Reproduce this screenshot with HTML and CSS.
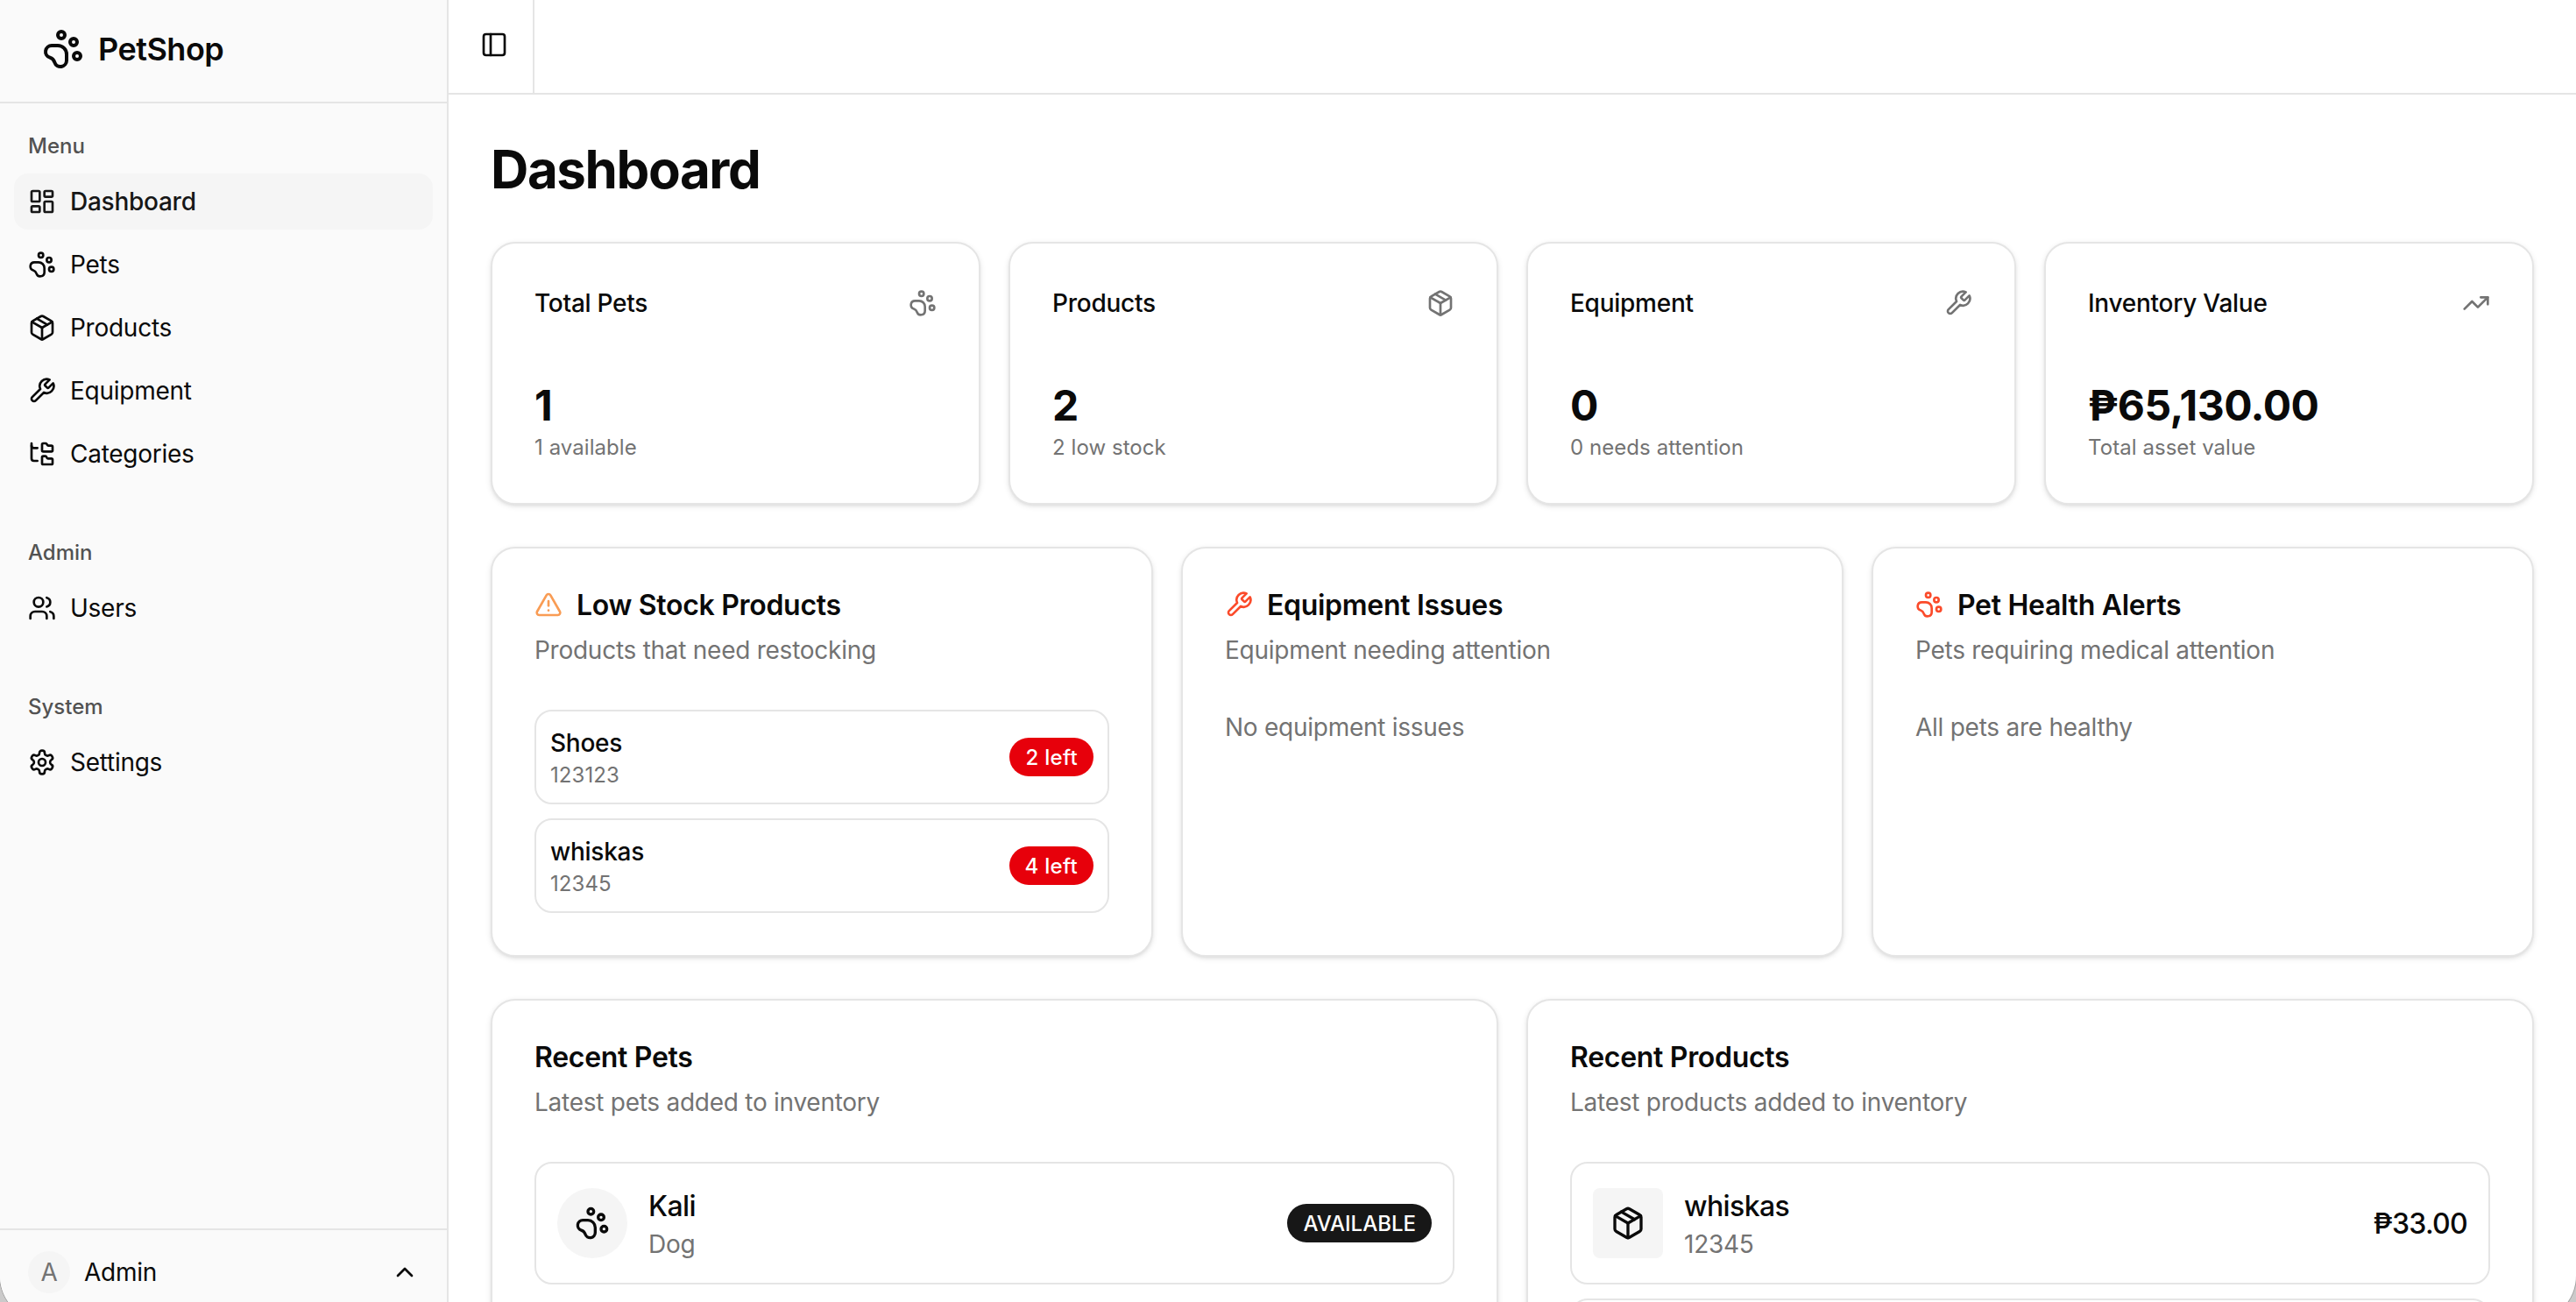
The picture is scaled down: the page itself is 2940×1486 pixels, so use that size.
FILE: index.html
```html
<!DOCTYPE html>
<html lang="en">
<head>
    <meta charset="UTF-8">
    <meta name="viewport" content="width=device-width, initial-scale=1.0">
    <title>Dashboard - PetShop</title>
    <link rel="stylesheet" href="styles.css">
</head>
<body>
    <!-- Icon set -->
    <svg class="icon-defs" xmlns="http://www.w3.org/2000/svg">
        <symbol id="paw" viewBox="0 0 24 24">
            <circle cx="11" cy="4" r="2"/>
            <circle cx="18" cy="8" r="2"/>
            <circle cx="20" cy="16" r="2"/>
            <path d="M9 10a5 5 0 0 1 5 5v3.5a3.5 3.5 0 0 1-6.84 1.045Q6.52 17.48 4.46 16.84A3.5 3.5 0 0 1 5.5 10Z"/>
        </symbol>
        <symbol id="dashboard" viewBox="0 0 24 24">
            <rect width="7" height="9" x="3" y="3" rx="1"/>
            <rect width="7" height="5" x="14" y="3" rx="1"/>
            <rect width="7" height="9" x="14" y="12" rx="1"/>
            <rect width="7" height="5" x="3" y="16" rx="1"/>
        </symbol>
        <symbol id="package" viewBox="0 0 24 24">
            <path d="M11 21.73a2 2 0 0 0 2 0l7-4A2 2 0 0 0 21 16V8a2 2 0 0 0-1-1.73l-7-4a2 2 0 0 0-2 0l-7 4A2 2 0 0 0 3 8v8a2 2 0 0 0 1 1.73z"/>
            <path d="M12 22V12"/>
            <path d="M3.29 7 12 12l8.71-5"/>
            <path d="m7.5 4.27 9 5.15"/>
        </symbol>
        <symbol id="wrench" viewBox="0 0 24 24">
            <path d="M14.7 6.3a1 1 0 0 0 0 1.4l1.6 1.6a1 1 0 0 0 1.4 0l3.77-3.77a6 6 0 0 1-7.94 7.94l-6.91 6.91a2.12 2.12 0 0 1-3-3l6.91-6.91a6 6 0 0 1 7.94-7.94l-3.76 3.76z"/>
        </symbol>
        <symbol id="folder-tree" viewBox="0 0 24 24">
            <path d="M20 10a1 1 0 0 0 1-1V6a1 1 0 0 0-1-1h-2.5a1 1 0 0 1-.8-.4l-.9-1.2A1 1 0 0 0 15 3h-2a1 1 0 0 0-1 1v5a1 1 0 0 0 1 1Z"/>
            <path d="M20 21a1 1 0 0 0 1-1v-3a1 1 0 0 0-1-1h-2.9a1 1 0 0 1-.88-.55l-.42-.85a1 1 0 0 0-.92-.6H13a1 1 0 0 0-1 1v5a1 1 0 0 0 1 1Z"/>
            <path d="M3 5a2 2 0 0 0 2 2h3"/>
            <path d="M3 3v13a2 2 0 0 0 2 2h3"/>
        </symbol>
        <symbol id="users" viewBox="0 0 24 24">
            <path d="M16 21v-2a4 4 0 0 0-4-4H6a4 4 0 0 0-4 4v2"/>
            <circle cx="9" cy="7" r="4"/>
            <path d="M22 21v-2a4 4 0 0 0-3-3.87"/>
            <path d="M16 3.13a4 4 0 0 1 0 7.75"/>
        </symbol>
        <symbol id="settings" viewBox="0 0 24 24">
            <path d="M12.22 2h-.44a2 2 0 0 0-2 2v.18a2 2 0 0 1-1 1.73l-.43.25a2 2 0 0 1-2 0l-.15-.08a2 2 0 0 0-2.73.73l-.22.38a2 2 0 0 0 .73 2.73l.15.1a2 2 0 0 1 1 1.72v.51a2 2 0 0 1-1 1.74l-.15.09a2 2 0 0 0-.73 2.73l.22.38a2 2 0 0 0 2.73.73l.15-.08a2 2 0 0 1 2 0l.43.25a2 2 0 0 1 1 1.73V20a2 2 0 0 0 2 2h.44a2 2 0 0 0 2-2v-.18a2 2 0 0 1 1-1.73l.43-.25a2 2 0 0 1 2 0l.15.08a2 2 0 0 0 2.73-.73l.22-.39a2 2 0 0 0-.73-2.73l-.15-.08a2 2 0 0 1-1-1.74v-.5a2 2 0 0 1 1-1.74l.15-.09a2 2 0 0 0 .73-2.73l-.22-.38a2 2 0 0 0-2.73-.73l-.15.08a2 2 0 0 1-2 0l-.43-.25a2 2 0 0 1-1-1.73V4a2 2 0 0 0-2-2z"/>
            <circle cx="12" cy="12" r="3"/>
        </symbol>
        <symbol id="chevron-up" viewBox="0 0 24 24">
            <path d="m18 15-6-6-6 6"/>
        </symbol>
        <symbol id="panel-left" viewBox="0 0 24 24">
            <rect width="18" height="18" x="3" y="3" rx="2"/>
            <path d="M9 3v18"/>
        </symbol>
        <symbol id="trending-up" viewBox="0 0 24 24">
            <path d="M22 7l-8.5 8.5-5-5L2 17"/>
            <path d="M16 7h6v6"/>
        </symbol>
        <symbol id="alert" viewBox="0 0 24 24">
            <path d="m21.73 18-8-14a2 2 0 0 0-3.48 0l-8 14A2 2 0 0 0 4 21h16a2 2 0 0 0 1.73-3"/>
            <path d="M12 9v4"/>
            <path d="M12 17h.01"/>
        </symbol>
    </svg>

    <div class="app">
        <!-- Sidebar -->
        <aside class="sidebar">
            <div class="brand">
                <svg class="icon icon-lg"><use href="#paw"/></svg>
                <span>PetShop</span>
            </div>

            <nav class="nav">
                <div class="nav-group">
                    <div class="nav-label">Menu</div>
                    <a class="nav-item active"><svg class="icon"><use href="#dashboard"/></svg><span>Dashboard</span></a>
                    <a class="nav-item"><svg class="icon"><use href="#paw"/></svg><span>Pets</span></a>
                    <a class="nav-item"><svg class="icon"><use href="#package"/></svg><span>Products</span></a>
                    <a class="nav-item"><svg class="icon"><use href="#wrench"/></svg><span>Equipment</span></a>
                    <a class="nav-item"><svg class="icon"><use href="#folder-tree"/></svg><span>Categories</span></a>
                </div>
                <div class="nav-group">
                    <div class="nav-label">Admin</div>
                    <a class="nav-item"><svg class="icon"><use href="#users"/></svg><span>Users</span></a>
                </div>
                <div class="nav-group">
                    <div class="nav-label">System</div>
                    <a class="nav-item"><svg class="icon"><use href="#settings"/></svg><span>Settings</span></a>
                </div>
            </nav>

            <div class="sidebar-footer">
                <div class="avatar">A</div>
                <span class="user-name">Admin</span>
                <svg class="icon"><use href="#chevron-up"/></svg>
            </div>
        </aside>

        <!-- Main content -->
        <main class="main">
            <header class="topbar">
                <div class="toggle"><svg class="icon"><use href="#panel-left"/></svg></div>
            </header>

            <div class="content">
                <h1>Dashboard</h1>

                <!-- Stats -->
                <section class="grid grid-4">
                    <div class="card stat">
                        <div class="stat-header"><span>Total Pets</span><svg class="icon muted"><use href="#paw"/></svg></div>
                        <div class="stat-value">1</div>
                        <div class="small">1 available</div>
                    </div>
                    <div class="card stat">
                        <div class="stat-header"><span>Products</span><svg class="icon muted"><use href="#package"/></svg></div>
                        <div class="stat-value">2</div>
                        <div class="small">2 low stock</div>
                    </div>
                    <div class="card stat">
                        <div class="stat-header"><span>Equipment</span><svg class="icon muted"><use href="#wrench"/></svg></div>
                        <div class="stat-value">0</div>
                        <div class="small">0 needs attention</div>
                    </div>
                    <div class="card stat">
                        <div class="stat-header"><span>Inventory Value</span><svg class="icon muted"><use href="#trending-up"/></svg></div>
                        <div class="stat-value">₱65,130.00</div>
                        <div class="small">Total asset value</div>
                    </div>
                </section>

                <!-- Alerts -->
                <section class="grid grid-3">
                    <div class="card">
                        <h2><svg class="icon orange"><use href="#alert"/></svg><span>Low Stock Products</span></h2>
                        <p class="desc">Products that need restocking</p>
                        <div class="list">
                            <div class="stock-row">
                                <div>
                                    <div class="row-title">Shoes</div>
                                    <div class="small">123123</div>
                                </div>
                                <span class="badge badge-red">2 left</span>
                            </div>
                            <div class="stock-row">
                                <div>
                                    <div class="row-title">whiskas</div>
                                    <div class="small">12345</div>
                                </div>
                                <span class="badge badge-red">4 left</span>
                            </div>
                        </div>
                    </div>
                    <div class="card">
                        <h2><svg class="icon red"><use href="#wrench"/></svg><span>Equipment Issues</span></h2>
                        <p class="desc">Equipment needing attention</p>
                        <p class="empty">No equipment issues</p>
                    </div>
                    <div class="card">
                        <h2><svg class="icon red"><use href="#paw"/></svg><span>Pet Health Alerts</span></h2>
                        <p class="desc">Pets requiring medical attention</p>
                        <p class="empty">All pets are healthy</p>
                    </div>
                </section>

                <!-- Recent items -->
                <section class="grid grid-2">
                    <div class="card">
                        <h2><span>Recent Pets</span></h2>
                        <p class="desc">Latest pets added to inventory</p>
                        <div class="list">
                            <div class="recent-row">
                                <div class="thumb round"><svg class="icon icon-md"><use href="#paw"/></svg></div>
                                <div class="recent-info">
                                    <div class="recent-name">Kali</div>
                                    <div class="recent-sub">Dog</div>
                                </div>
                                <span class="badge badge-dark">AVAILABLE</span>
                            </div>
                        </div>
                    </div>
                    <div class="card">
                        <h2><span>Recent Products</span></h2>
                        <p class="desc">Latest products added to inventory</p>
                        <div class="list">
                            <div class="recent-row">
                                <div class="thumb"><svg class="icon icon-md"><use href="#package"/></svg></div>
                                <div class="recent-info">
                                    <div class="recent-name">whiskas</div>
                                    <div class="recent-sub">12345</div>
                                </div>
                                <span class="price">₱33.00</span>
                            </div>
                            <div class="recent-row">
                                <div class="thumb"></div>
                            </div>
                        </div>
                    </div>
                </section>
            </div>
        </main>
    </div>
</body>
</html>
```

FILE: styles.css
```css
* {
    box-sizing: border-box;
    margin: 0;
    padding: 0;
}

body {
    height: 100vh;
    overflow: hidden;
    background-color: #cbcaca;
    color: #0a0a0a;
    font-family: Inter, "Liberation Sans", sans-serif;
    font-size: 28px;
    line-height: 40px;
    letter-spacing: -0.26px;
}

.icon-defs {
    display: none;
}

.icon {
    flex: none;
    width: 32px;
    height: 32px;
    fill: none;
    stroke: currentColor;
    stroke-width: 2;
    stroke-linecap: round;
    stroke-linejoin: round;
}

.icon-md {
    width: 40px;
    height: 40px;
}

.icon-lg {
    width: 48px;
    height: 48px;
}

.muted {
    color: #737373;
}

.orange {
    color: #f99c54;
}

.red {
    color: #fb4b2b;
}

.app {
    display: flex;
    height: 1508px;
    overflow: hidden;
    background-color: #fff;
    border-radius: 0 0 52px 52px;
    box-shadow: 0 0 0 1px #a3a3a3;
}

/* Sidebar */
.sidebar {
    display: flex;
    flex-direction: column;
    flex: none;
    width: 512px;
    background-color: #fafafa;
    border-right: 2px solid #e5e5e5;
}

.brand {
    display: flex;
    align-items: center;
    gap: 16px;
    height: 118px;
    padding: 0 48px 4px;
    border-bottom: 2px solid #e5e5e5;
    font-size: 36px;
    font-weight: 600;
    letter-spacing: -0.5px;
}

.nav {
    display: flex;
    flex: 1;
    flex-direction: column;
    gap: 16px;
}

.nav-group {
    display: flex;
    flex-direction: column;
    gap: 8px;
    padding: 16px;
}

.nav-label {
    height: 64px;
    margin-bottom: -8px;
    padding: 0 16px;
    color: #525252;
    font-size: 24px;
    font-weight: 500;
    line-height: 66px;
    letter-spacing: 0;
}

.nav-item {
    display: flex;
    align-items: center;
    gap: 16px;
    height: 64px;
    padding: 0 16px;
    border-radius: 16px;
}

.nav-item.active {
    background-color: #f5f5f5;
    color: #171717;
    font-weight: 500;
}

.sidebar-footer {
    display: flex;
    align-items: center;
    gap: 16px;
    height: 106px;
    padding: 0 32px 8px;
    border-top: 2px solid #e5e5e5;
}

.avatar {
    width: 48px;
    height: 48px;
    border-radius: 50%;
    background-color: #f5f5f5;
    color: #737373;
    line-height: 48px;
    text-align: center;
}

.user-name {
    flex: 1;
}

/* Top bar */
.main {
    flex: 1;
    min-width: 0;
}

.topbar {
    height: 108px;
    border-bottom: 2px solid #e5e5e5;
}

.toggle {
    width: 98px;
    height: 106px;
    padding: 35px 0 0 36px;
    border-right: 2px solid #e5e5e5;
}

.toggle .icon {
    display: block;
}

.content {
    display: flex;
    flex-direction: column;
    gap: 48px;
    padding: 48px;
}

h1 {
    height: 72px;
    font-size: 60px;
    font-weight: 700;
    line-height: 74px;
    letter-spacing: -1.4px;
}

/* Cards */
.grid {
    display: grid;
    gap: 32px;
}

.grid-4 {
    grid-template-columns: repeat(4, 1fr);
}

.grid-3 {
    grid-template-columns: repeat(3, 1fr);
}

.grid-2 {
    grid-template-columns: repeat(2, 1fr);
}

.card {
    padding: 48px;
    border: 2px solid #e5e5e5;
    border-radius: 28px;
    background-color: #fff;
    box-shadow: 0 2px 6px rgba(0, 0, 0, 0.1), 0 2px 4px -2px rgba(0, 0, 0, 0.1);
}

.stat-header {
    display: flex;
    align-items: center;
    justify-content: space-between;
    margin-bottom: 64px;
    font-weight: 500;
}

.stat-value {
    height: 64px;
    font-size: 48px;
    font-weight: 700;
    line-height: 66px;
    letter-spacing: -0.55px;
}

.small {
    height: 32px;
    color: #737373;
    font-size: 24px;
    line-height: 34px;
    letter-spacing: 0.06px;
}

h2 {
    display: flex;
    align-items: center;
    gap: 16px;
    height: 32px;
    font-size: 32px;
    font-weight: 600;
    line-height: 32px;
    letter-spacing: -0.3px;
}

h2 span {
    padding-top: 2px;
}

.desc {
    margin-top: 16px;
    color: #737373;
}

.empty {
    margin-top: 48px;
    color: #737373;
}

/* Lists */
.list {
    display: flex;
    flex-direction: column;
    gap: 16px;
    margin-top: 48px;
}

.stock-row {
    display: flex;
    align-items: center;
    justify-content: space-between;
    padding: 16px;
    border: 2px solid #e5e5e5;
    border-radius: 20px;
}

.row-title {
    font-weight: 500;
}

.badge {
    padding: 7px 18px 5px;
    border-radius: 22px;
    color: #fff;
    font-size: 24px;
    font-weight: 500;
    line-height: 32px;
    letter-spacing: 0;
}

.badge-red {
    background-color: #e7000b;
    letter-spacing: 0.3px;
}

.badge-dark {
    background-color: #171717;
}

.recent-row {
    display: flex;
    align-items: center;
    gap: 24px;
    height: 140px;
    padding: 24px;
    border: 2px solid #e5e5e5;
    border-radius: 20px;
}

.thumb {
    display: flex;
    align-items: center;
    justify-content: center;
    width: 80px;
    height: 80px;
    border-radius: 8px;
    background-color: #f5f5f5;
}

.thumb.round {
    border-radius: 50%;
}

.recent-info {
    flex: 1;
}

.recent-name {
    height: 48px;
    font-size: 32px;
    font-weight: 500;
    line-height: 50px;
    letter-spacing: -0.6px;
}

.recent-sub {
    color: #737373;
}

.price {
    padding-top: 2px;
    font-size: 32px;
    font-weight: 500;
    letter-spacing: -0.7px;
}
```
